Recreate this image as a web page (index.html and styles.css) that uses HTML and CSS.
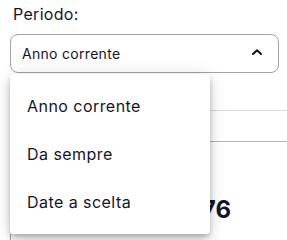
FILE: index.html
```html
<!DOCTYPE html>
<html lang="it">
<head>
  <meta charset="UTF-8" />
  <title>Periodo</title>
  <link rel="stylesheet" href="styles.css">
</head>
<body>
  <div class="filter">
    <label class="filter-label">Periodo:</label>
    <div class="select-wrap">
      <div class="select">
        <span>Anno corrente</span>
        <svg class="chevron" width="10" height="6" viewBox="0 0 10 6">
          <path d="M1 5 L5 1.2 L9 5" fill="none" stroke="#14142b" stroke-width="2" stroke-linecap="round" stroke-linejoin="round"/>
        </svg>
      </div>
      <!-- menu aperto -->
      <ul class="menu">
        <li>Anno corrente</li>
        <li>Da sempre</li>
        <li>Date a scelta</li>
      </ul>
    </div>
  </div>

  <div class="rows">
    <div class="row row-light"></div>
    <div class="row row-dark"></div>
  </div>

  <div class="stat">
    <span class="stat-value">1.976</span>
  </div>

  <div class="card">
    <span class="card-note">totale ordini anno</span>
  </div>
</body>
</html>
```

FILE: styles.css
```css
*{margin:0;padding:0;box-sizing:border-box}
body{
  font-family:'Inter','Noto Sans',sans-serif;
  color:#14142b;
  background:#fff;
  overflow:hidden;
  height:240px;
}

.filter{padding:4px 8px 0 10px}
.filter-label{display:block;font-size:16px;line-height:20px;margin:0 0 10px 3px;letter-spacing:.3px}

.select-wrap{position:relative}
.select{
  display:flex;align-items:center;justify-content:space-between;
  height:39px;padding:0 16px 0 11px;
  border:1px solid #a3a3a3;border-radius:8px;
  font-size:14px;letter-spacing:.3px;
}
.chevron{margin-bottom:3px}

.menu{
  position:absolute;top:40px;left:0;z-index:10;
  width:200px;padding:8px 0;
  list-style:none;background:#fff;border-radius:4px;
  box-shadow:0 3px 5px -1px rgba(0,0,0,.2),0 6px 10px 0 rgba(0,0,0,.14),0 1px 18px 0 rgba(0,0,0,.12);
}
.menu li{height:48px;line-height:48px;padding-left:17px;font-size:16px;letter-spacing:.45px}

.rows{margin-left:10px}
.row{height:31px}
.row-light{height:38px;border-bottom:1px solid #dcdcdc}
.row-dark{border-bottom:1px solid #b5b5b5}

.stat{padding:54px 0 0;width:231px;text-align:right}
.stat-value{font-size:24px;font-weight:700;line-height:28px}

.card{margin:10px 8px 0 10px;height:7px;border-left:1px solid #9e9e9e;text-align:right;padding:5px 19px 0 0;overflow:hidden}
.card-note{display:block;font-size:11px;line-height:12px;color:#bbb;letter-spacing:.6px}
```
